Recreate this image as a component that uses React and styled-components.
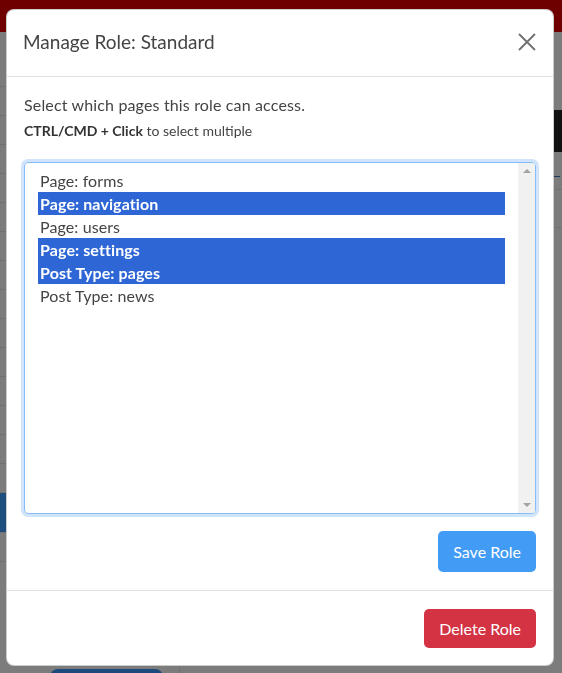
import React from "react";
import styled, { createGlobalStyle } from "styled-components";

const OPTIONS = [
  { label: "Page: forms", selected: false },
  { label: "Page: navigation", selected: true },
  { label: "Page: users", selected: false },
  { label: "Page: settings", selected: true },
  { label: "Post Type: pages", selected: true },
  { label: "Post Type: news", selected: false },
];

const SIDEBAR_ROWS = 17;

export default function App() {
  return (
    <>
      <GlobalStyle />
      <Page>
        <TopBar />
        <PageBody>
          <Sidebar>
            {Array.from({ length: SIDEBAR_ROWS }).map((_, i) => (
              <SideItem key={i} active={i === 15} />
            ))}
          </Sidebar>
          <Main>
            <TableHead />
            <TableRow>
              <FakeLink />
            </TableRow>
            <TableRow />
            <BottomButton />
          </Main>
        </PageBody>
      </Page>

      <Backdrop>
        <Dialog>
          <Header>
            <Title>Manage Role: Standard</Title>
            <CloseButton aria-label="Close">
              <svg width="18" height="18" viewBox="0 0 18 18">
                <path d="M1 1 L17 17 M17 1 L1 17" stroke="#6f6f6f" strokeWidth="1.8" fill="none" />
              </svg>
            </CloseButton>
          </Header>

          <Body>
            <Lead>Select which pages this role can access.</Lead>
            <Hint>
              <strong>CTRL/CMD + Click</strong> to select multiple
            </Hint>

            <MultiSelect>
              <OptionList>
                {OPTIONS.map((opt) => (
                  <Option key={opt.label} selected={opt.selected}>
                    {opt.label}
                  </Option>
                ))}
              </OptionList>
              <Scrollbar>
                <Arrow up />
                <Arrow />
              </Scrollbar>
            </MultiSelect>

            <Actions>
              <Button variant="primary">Save Role</Button>
            </Actions>
          </Body>

          <Footer>
            <Button variant="danger">Delete Role</Button>
          </Footer>
        </Dialog>
      </Backdrop>
    </>
  );
}

const GlobalStyle = createGlobalStyle`
  * { box-sizing: border-box; }
  body {
    margin: 0;
    font-family: Lato, "Noto Sans", "Liberation Sans", sans-serif;
    color: #444;
    overflow: hidden;
  }
`;

/* page behind the modal */

const Page = styled.div`
  height: 100vh;
  background: #f9f9f9;
  display: flex;
  flex-direction: column;
`;

const TopBar = styled.div`
  height: 32px;
  background: #dc0000;
`;

const PageBody = styled.div`
  flex: 1;
  display: flex;
`;

const Sidebar = styled.div`
  width: 180px;
  padding-top: 26px;
  border-right: 1px solid #e4e4e4;
  display: flex;
  flex-direction: column;
`;

const SideItem = styled.div`
  flex: none;
  height: ${(p) => (p.active ? "40px" : "29px")};
  border-bottom: 1px solid #e2e2e2;
  background: ${(p) => (p.active ? "#3d9dfd" : "transparent")};
`;

const Main = styled.div`
  flex: 1;
  display: flex;
  flex-direction: column;
  padding-top: 78px;
  position: relative;
`;

const TableHead = styled.div`
  height: 42px;
  background: #222;
`;

const TableRow = styled.div`
  height: 38px;
  border-bottom: 1px solid #e4e4e4;
  display: flex;
  align-items: center;
  justify-content: flex-end;
  padding-right: 2px;
`;

const FakeLink = styled.div`
  width: 8px;
  height: 12px;
  border-bottom: 1px solid #3b6fb0;
`;

const BottomButton = styled.div`
  position: absolute;
  left: -130px;
  bottom: -10px;
  width: 113px;
  height: 14px;
  background: #3d95f6;
  border-radius: 8px 8px 0 0;
`;

/* modal */

const Backdrop = styled.div`
  position: fixed;
  inset: 0;
  background: rgba(0, 0, 0, 0.5);
  padding: 9px 8px 0 6px;
`;

const Dialog = styled.div`
  width: 548px;
  background: #fff;
  border: 1px solid rgba(0, 0, 0, 0.2);
  border-radius: 8px;
  display: flex;
  flex-direction: column;
`;

const Header = styled.div`
  display: flex;
  align-items: center;
  justify-content: space-between;
  padding: 17px 17px 19px 16px;
  border-bottom: 1px solid #dee2e6;
`;

const Title = styled.h5`
  margin: 0;
  font-size: 19px;
  font-weight: 400;
  line-height: 30px;
  color: #444;
`;

const CloseButton = styled.button`
  border: 0;
  background: transparent;
  padding: 0;
  width: 18px;
  height: 18px;
  display: flex;
  cursor: pointer;
`;

const Body = styled.div`
  padding: 17px 17px 18px;
  display: flex;
  flex-direction: column;
`;

const Lead = styled.p`
  margin: 0 0 5px;
  font-size: 16px;
  letter-spacing: 0.15px;
  line-height: 22px;
  color: #444;
`;

const Hint = styled.div`
  font-size: 14px;
  line-height: 20px;
  color: #444;

  strong {
    font-weight: 700;
    color: #333;
  }
`;

const MultiSelect = styled.div`
  margin-top: 21px;
  height: 352px;
  border: 1px solid #86bdf6;
  border-radius: 4px;
  box-shadow: 0 0 0 3px #d0e5fc;
  display: grid;
  grid-template-columns: 1fr 17px;
  overflow: hidden;
`;

const OptionList = styled.div`
  padding: 6px 13px;
  display: flex;
  flex-direction: column;
`;

const Option = styled.div`
  height: 23px;
  line-height: 23px;
  padding: 0 2px;
  font-size: 16px;
  letter-spacing: 0.1px;
  font-weight: ${(p) => (p.selected ? 700 : 400)};
  color: ${(p) => (p.selected ? "#fff" : "#444")};
  background: ${(p) => (p.selected ? "#2e66d6" : "transparent")};
`;

const Scrollbar = styled.div`
  background: #f1f1f1;
  display: flex;
  flex-direction: column;
  justify-content: space-between;
  align-items: center;
  padding: 6px 0;
`;

const Arrow = styled.div`
  width: 0;
  height: 0;
  border-left: 4px solid transparent;
  border-right: 4px solid transparent;
  ${(p) =>
    p.up
      ? "border-bottom: 4px solid #a3a3a3;"
      : "border-top: 4px solid #a3a3a3;"}
`;

const Actions = styled.div`
  display: flex;
  justify-content: flex-end;
  margin-top: 17px;
`;

const Button = styled.button`
  border: 0;
  border-radius: 5px;
  padding: 0 15px;
  height: ${(p) => (p.variant === "danger" ? "39px" : "41px")};
  font-family: inherit;
  font-size: 16px;
  color: #fff;
  background: ${(p) => (p.variant === "danger" ? "#d33343" : "#429cf5")};
  cursor: pointer;
`;

const Footer = styled.div`
  border-top: 1px solid #dee2e6;
  padding: 18px 17px 17px;
  display: flex;
  justify-content: flex-end;
`;
